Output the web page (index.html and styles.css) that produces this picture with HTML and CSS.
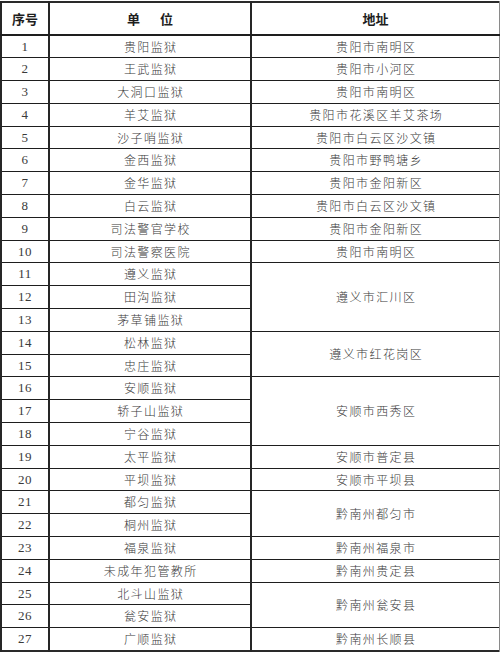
FILE: index.html
```html
<!DOCTYPE html>
<html lang="zh-CN">
<head>
<meta charset="utf-8">
<title>监狱名单</title>
<link rel="stylesheet" href="styles.css">
</head>
<body>
<table class="list">
  <colgroup>
    <col class="c-no">
    <col class="c-unit">
    <col class="c-addr">
  </colgroup>
  <thead>
    <tr class="head">
      <th>序号</th>
      <th><span class="spread">单位</span></th>
      <th>地址</th>
    </tr>
  </thead>
  <tbody>
    <tr><td class="no">1</td><td>贵阳监狱</td><td>贵阳市南明区</td></tr>
    <tr><td class="no">2</td><td>王武监狱</td><td>贵阳市小河区</td></tr>
    <tr><td class="no">3</td><td>大洞口监狱</td><td>贵阳市南明区</td></tr>
    <tr><td class="no">4</td><td>羊艾监狱</td><td>贵阳市花溪区羊艾茶场</td></tr>
    <tr><td class="no">5</td><td>沙子哨监狱</td><td>贵阳市白云区沙文镇</td></tr>
    <tr><td class="no">6</td><td>金西监狱</td><td>贵阳市野鸭塘乡</td></tr>
    <tr><td class="no">7</td><td>金华监狱</td><td>贵阳市金阳新区</td></tr>
    <tr><td class="no">8</td><td>白云监狱</td><td>贵阳市白云区沙文镇</td></tr>
    <tr><td class="no">9</td><td>司法警官学校</td><td>贵阳市金阳新区</td></tr>
    <tr><td class="no">10</td><td>司法警察医院</td><td>贵阳市南明区</td></tr>
    <tr><td class="no">11</td><td>遵义监狱</td><td rowspan="3">遵义市汇川区</td></tr>
    <tr><td class="no">12</td><td>田沟监狱</td></tr>
    <tr><td class="no">13</td><td>茅草铺监狱</td></tr>
    <tr><td class="no">14</td><td>松林监狱</td><td rowspan="2">遵义市红花岗区</td></tr>
    <tr><td class="no">15</td><td>忠庄监狱</td></tr>
    <tr><td class="no">16</td><td>安顺监狱</td><td rowspan="3">安顺市西秀区</td></tr>
    <tr><td class="no">17</td><td>轿子山监狱</td></tr>
    <tr><td class="no">18</td><td>宁谷监狱</td></tr>
    <tr><td class="no">19</td><td>太平监狱</td><td>安顺市普定县</td></tr>
    <tr><td class="no">20</td><td>平坝监狱</td><td>安顺市平坝县</td></tr>
    <tr><td class="no">21</td><td>都匀监狱</td><td rowspan="2">黔南州都匀市</td></tr>
    <tr><td class="no">22</td><td>桐州监狱</td></tr>
    <tr><td class="no">23</td><td>福泉监狱</td><td>黔南州福泉市</td></tr>
    <tr><td class="no">24</td><td>未成年犯管教所</td><td>黔南州贵定县</td></tr>
    <tr><td class="no">25</td><td>北斗山监狱</td><td rowspan="2">黔南州瓮安县</td></tr>
    <tr><td class="no">26</td><td>瓮安监狱</td></tr>
    <tr><td class="no">27</td><td>广顺监狱</td><td>黔南州长顺县</td></tr>
  </tbody>
</table>
</body>
</html>
```

FILE: styles.css
```css
html, body {
  margin: 0;
  padding: 0;
  background: #ffffff;
}

.list {
  margin: 1px 0 0 0;
  width: 499px;
  table-layout: fixed;
  border-collapse: collapse;
  border: 2px solid #2a2a2a;
  border-right-color: #8a8a8a;
  color: #3a3a3a;
  font-family: "Noto Sans CJK SC", "Liberation Serif", serif;
  font-size: 12px;
  font-weight: 300;
}

.c-no { width: 48px; }
.c-unit { width: 202px; }
.c-addr { width: 249px; }

.list th,
.list td {
  border-top: 1px solid #1e1e1e;
  border-bottom: 1px solid #1e1e1e;
  border-left: 2px solid #262626;
  border-right: 2px solid #262626;
  padding: 0;
  text-align: center;
  vertical-align: middle;
  line-height: 14px;
  letter-spacing: 1.4px;
  white-space: nowrap;
}

.list th:last-child,
.list td:last-child {
  border-right: 2px solid #8a8a8a;
}

.list td {
  padding-left: 1.4px;
}

.head {
  height: 33px;
}

.list th {
  font-weight: 700;
  font-size: 13px;
  color: #1e1e1e;
  letter-spacing: 0;
  border-bottom: 2px solid #1e1e1e;
}

.spread {
  letter-spacing: 20px;
  padding-left: 20px;
}

.list tbody tr {
  height: 22.8px;
}

.list td.no {
  font-family: "Liberation Serif", serif;
  font-size: 13px;
  font-weight: 400;
  letter-spacing: 0.5px;
  padding-left: 0;
}
```
